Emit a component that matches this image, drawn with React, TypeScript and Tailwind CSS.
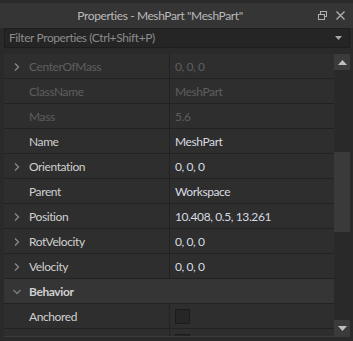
import { ReactNode } from 'react'

type Row = {
  label: string
  value?: string
  expand?: boolean
  disabled?: boolean
  check?: boolean
}

const rows: Row[] = [
  { label: 'CenterOfMass', value: '0, 0, 0', expand: true, disabled: true },
  { label: 'ClassName', value: 'MeshPart', disabled: true },
  { label: 'Mass', value: '5.6', disabled: true },
  { label: 'Name', value: 'MeshPart' },
  { label: 'Orientation', value: '0, 0, 0', expand: true },
  { label: 'Parent', value: 'Workspace' },
  { label: 'Position', value: '10.408, 0.5, 13.261', expand: true },
  { label: 'RotVelocity', value: '0, 0, 0', expand: true },
  { label: 'Velocity', value: '0, 0, 0', expand: true },
]

function Chevron({ down = false }: { down?: boolean }) {
  return (
    <svg width="10" height="10" viewBox="0 0 10 10" className="shrink-0">
      {down ? (
        <path d="M1.5 3 L5 6.5 L8.5 3" fill="none" stroke="#7d7d7d" strokeWidth="1.3" />
      ) : (
        <path d="M3 1.5 L6.5 5 L3 8.5" fill="none" stroke="#8a8a8a" strokeWidth="1.3" />
      )}
    </svg>
  )
}

function PropRow({ row }: { row: Row }) {
  const labelColor = row.disabled ? 'text-[#5e5e5e]' : 'text-[#d0d0d0]'
  const valueColor = row.disabled ? 'text-[#5e5e5e]' : 'text-[#d6dbe0]'
  return (
    <div className="flex h-[25px] border-b border-[#222222] bg-[#2e2e2e]">
      <div className="flex w-[166px] items-center border-r border-[#222222] pt-[1px]">
        <div className="flex w-[25px] justify-center pl-[1px]">{row.expand && <Chevron />}</div>
        <span className={labelColor}>{row.label}</span>
      </div>
      <div className="flex flex-1 items-center pl-[5px] pt-[1px]">
        {row.check ? (
          <div className="h-[15px] w-[15px] border border-[#1c1c1c] bg-[#262626]" />
        ) : (
          <span className={valueColor}>{row.value}</span>
        )}
      </div>
    </div>
  )
}

function ScrollButton({ children }: { children: ReactNode }) {
  return <div className="flex h-[16px] w-[16px] items-center justify-center bg-[#3b3b3b]">{children}</div>
}

export default function App() {
  return (
    <div
      className="flex h-[341px] w-[353px] flex-col overflow-hidden bg-[#2a2a2a] pt-[3px] text-[12px] tracking-[-0.4px]"
      style={{ fontFamily: 'Lato, "Noto Sans", sans-serif' }}
    >
      <header className="relative flex h-[25px] items-center justify-center bg-[#353535] pr-[33px] pt-[1px] text-[#b9b9b9]">
        <span>Properties - MeshPart "MeshPart"</span>
        <div className="absolute right-[8px] top-[8px] flex items-center gap-[9px]">
          <svg width="9" height="9" viewBox="0 0 9 9">
            <rect x="2.5" y="0.5" width="6" height="5" fill="none" stroke="#b0b0b0" />
            <rect x="0.5" y="3.5" width="6" height="5" fill="#353535" stroke="#b0b0b0" />
          </svg>
          <svg width="9" height="9" viewBox="0 0 9 9">
            <path d="M0.5 0.5 L8.5 8.5 M8.5 0.5 L0.5 8.5" stroke="#b0b0b0" strokeWidth="1.3" />
          </svg>
        </div>
      </header>

      <div className="ml-[4px] mr-[3px] flex h-[20px] items-center justify-between border border-[#1e1e1e] bg-[#252525] pl-[4px] pr-[7px] text-[#8c8c8c]">
        <span>Filter Properties (Ctrl+Shift+P)</span>
        <svg width="7" height="4" viewBox="0 0 7 4">
          <path d="M0 0 L7 0 L3.5 4 Z" fill="#a8a8a8" />
        </svg>
      </div>

      <div className="ml-[4px] mr-[3px] mt-[6px] flex h-[283px] border-b border-[#3a3a3a]">
        <div className="flex-1 overflow-hidden">
          {rows.map((r) => (
            <PropRow key={r.label} row={r} />
          ))}
          <div className="flex h-[25px] items-center border-b border-[#222222] bg-[#353535] pt-[1px]">
            <div className="flex w-[25px] justify-center pl-[1px]">
              <Chevron down />
            </div>
            <span className="font-bold text-[#d0d0d0]">Behavior</span>
          </div>
          <PropRow row={{ label: 'Anchored', check: true }} />
          <PropRow row={{ label: '', check: true }} />
        </div>
        <div className="flex w-[16px] flex-col bg-[#292929]">
          <ScrollButton>
            <svg width="9" height="5" viewBox="0 0 9 5">
              <path d="M0 5 L9 5 L4.5 0 Z" fill="#c0c0c0" />
            </svg>
          </ScrollButton>
          <div className="flex flex-1 flex-col">
            <div className="h-[82px]" />
            <div className="h-[80px] bg-[#3a3a3a]" />
            <div className="flex-1" />
          </div>
          <ScrollButton>
            <svg width="9" height="5" viewBox="0 0 9 5">
              <path d="M0 0 L9 0 L4.5 5 Z" fill="#c0c0c0" />
            </svg>
          </ScrollButton>
        </div>
      </div>
    </div>
  )
}
